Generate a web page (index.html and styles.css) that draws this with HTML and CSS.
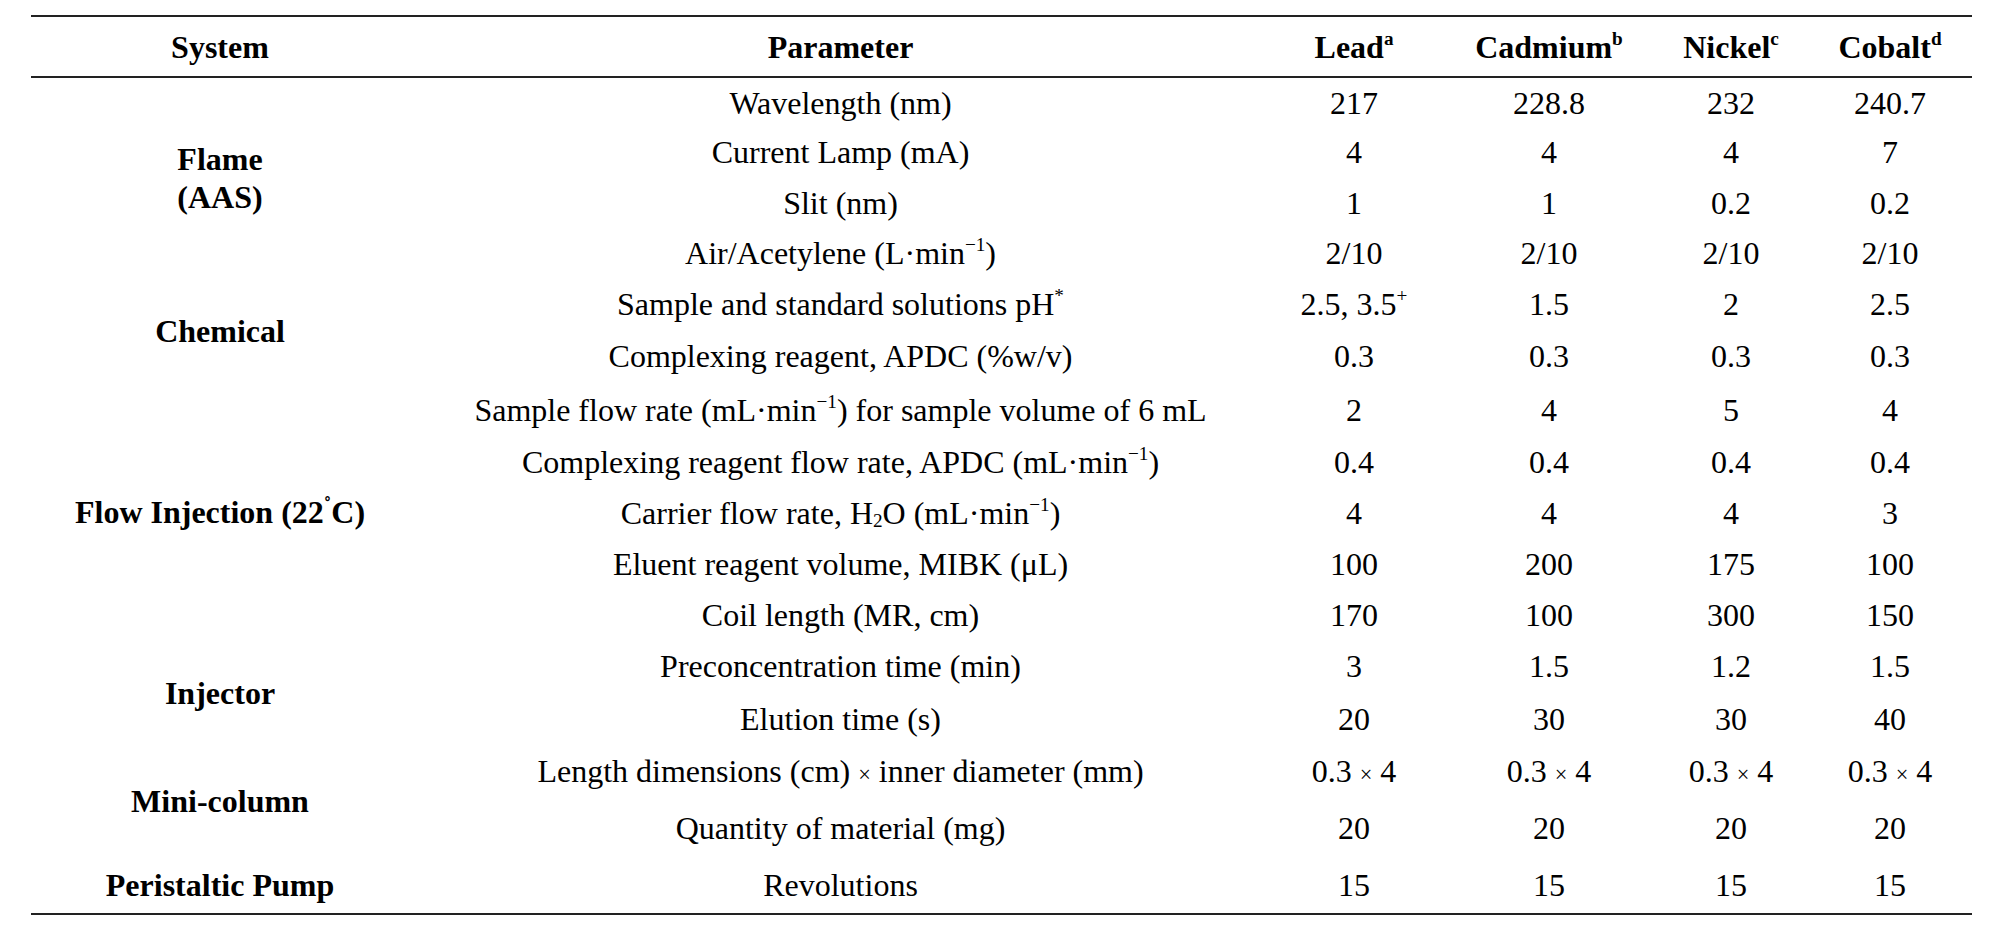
FILE: index.html
```html
<!DOCTYPE html>
<html lang="en">
<head>
<meta charset="utf-8">
<title>Operating parameters</title>
<link rel="stylesheet" href="styles.css">
</head>
<body>
<div class="wrap">
<table class="params">
  <colgroup>
    <col class="c-sys">
    <col class="c-par">
    <col class="c-lead">
    <col class="c-cd">
    <col class="c-ni">
    <col class="c-co">
  </colgroup>
  <thead>
    <tr class="head">
      <th>System</th>
      <th class="par">Parameter</th>
      <th>Lead<sup>a</sup></th>
      <th>Cadmium<sup>b</sup></th>
      <th>Nickel<sup>c</sup></th>
      <th>Cobalt<sup>d</sup></th>
    </tr>
  </thead>
  <tbody>
    <tr class="r50">
      <td class="sys" rowspan="4">Flame<br>(AAS)</td>
      <td class="par">Wavelength (nm)</td><td>217</td><td>228.8</td><td>232</td><td>240.7</td>
    </tr>
    <tr class="r50">
      <td class="par">Current Lamp (mA)</td><td>4</td><td>4</td><td>4</td><td>7</td>
    </tr>
    <tr class="r51">
      <td class="par">Slit (nm)</td><td>1</td><td>1</td><td>0.2</td><td>0.2</td>
    </tr>
    <tr class="r50">
      <td class="par">Air/Acetylene (L·min<sup>−1</sup>)</td><td>2/10</td><td>2/10</td><td>2/10</td><td>2/10</td>
    </tr>
    <tr class="r51">
      <td class="sys" rowspan="2">Chemical</td>
      <td class="par">Sample and standard solutions pH<sup>*</sup></td><td>2.5, 3.5<sup>+</sup></td><td>1.5</td><td>2</td><td>2.5</td>
    </tr>
    <tr class="r54">
      <td class="par">Complexing reagent, APDC (%w/v)</td><td>0.3</td><td>0.3</td><td>0.3</td><td>0.3</td>
    </tr>
    <tr class="r53">
      <td class="sys" rowspan="5">Flow Injection (22<sup class="deg">˚</sup>C)</td>
      <td class="par">Sample flow rate (mL·min<sup>−1</sup>) for sample volume of 6 mL</td><td>2</td><td>4</td><td>5</td><td>4</td>
    </tr>
    <tr class="r51">
      <td class="par">Complexing reagent flow rate, APDC (mL·min<sup>−1</sup>)</td><td>0.4</td><td>0.4</td><td>0.4</td><td>0.4</td>
    </tr>
    <tr class="r51">
      <td class="par">Carrier flow rate, H<sub>2</sub>O (mL·min<sup>−1</sup>)</td><td>4</td><td>4</td><td>4</td><td>3</td>
    </tr>
    <tr class="r51">
      <td class="par">Eluent reagent volume, MIBK (μL)</td><td>100</td><td>200</td><td>175</td><td>100</td>
    </tr>
    <tr class="r51">
      <td class="par">Coil length (MR, cm)</td><td>170</td><td>100</td><td>300</td><td>150</td>
    </tr>
    <tr class="r52">
      <td class="sys" rowspan="2">Injector</td>
      <td class="par">Preconcentration time (min)</td><td>3</td><td>1.5</td><td>1.2</td><td>1.5</td>
    </tr>
    <tr class="r53">
      <td class="par">Elution time (s)</td><td>20</td><td>30</td><td>30</td><td>40</td>
    </tr>
    <tr class="r55">
      <td class="sys" rowspan="2">Mini-column</td>
      <td class="par">Length dimensions (cm) <span class="x">×</span> inner diameter (mm)</td><td>0.3 <span class="x">×</span> 4</td><td>0.3 <span class="x">×</span> 4</td><td>0.3 <span class="x">×</span> 4</td><td>0.3 <span class="x">×</span> 4</td>
    </tr>
    <tr class="r56">
      <td class="par">Quantity of material (mg)</td><td>20</td><td>20</td><td>20</td><td>20</td>
    </tr>
    <tr class="r58 last">
      <td class="sys">Peristaltic Pump</td>
      <td class="par">Revolutions</td><td>15</td><td>15</td><td>15</td><td>15</td>
    </tr>
  </tbody>
</table>
</div>
</body>
</html>
```

FILE: styles.css
```css
html, body {
  margin: 0;
  padding: 0;
  background: #ffffff;
}

body {
  font-family: "Liberation Serif", "Times New Roman", serif;
  color: #000000;
}

.wrap {
  padding: 15px 0 0 31px;
}

.params {
  border-collapse: collapse;
  table-layout: fixed;
  width: 1941px;
  font-size: 32px;
  line-height: 38px;
}

.c-sys { width: 378px; }
.c-par { width: 855px; }
.c-lead { width: 180px; }
.c-cd { width: 210px; }
.c-ni { width: 154px; }
.c-co { width: 164px; }

.params th,
.params td {
  padding: 0;
  text-align: center;
  vertical-align: middle;
  white-space: nowrap;
}

.params th {
  font-weight: bold;
}

.params .par {
  padding-left: 8px;
}

.params td.sys {
  font-weight: bold;
}

.head {
  height: 61px;
}

.head th {
  border-top: 2px solid #222222;
  border-bottom: 2px solid #222222;
}

.last td {
  border-bottom: 2px solid #222222;
}

.r50 { height: 50px; }
.r51 { height: 51px; }
.r52 { height: 52px; }
.r53 { height: 53px; }
.r54 { height: 54px; }
.r55 { height: 55px; }
.r56 { height: 56px; }
.r58 { height: 58px; }

sup {
  font-size: 0.6em;
  line-height: 0;
  vertical-align: 0.7em;
}

sub {
  font-size: 0.6em;
  line-height: 0;
  vertical-align: -0.15em;
}

sup.deg {
  font-size: 0.7em;
  vertical-align: 0.45em;
}

.x {
  font-size: 0.7em;
}
```
